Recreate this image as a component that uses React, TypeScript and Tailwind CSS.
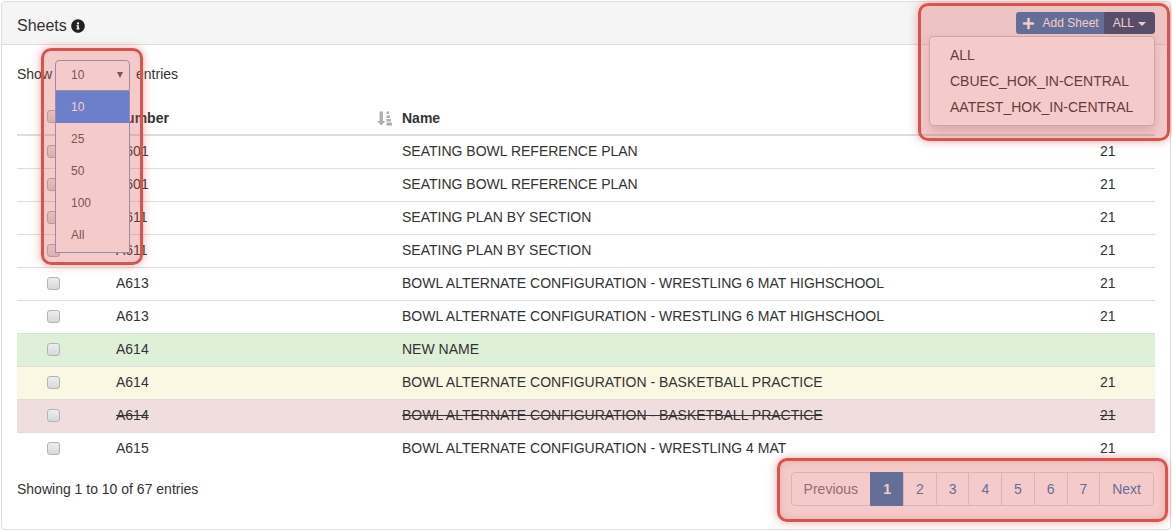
import { FaInfoCircle, FaPlus } from 'react-icons/fa'

type Row = {
  num: string
  name: string
  rev: string
  tone?: 'new' | 'changed' | 'deleted'
}

const rows: Row[] = [
  { num: 'A601', name: 'SEATING BOWL REFERENCE PLAN', rev: '21' },
  { num: 'A601', name: 'SEATING BOWL REFERENCE PLAN', rev: '21' },
  { num: 'A611', name: 'SEATING PLAN BY SECTION', rev: '21' },
  { num: 'A611', name: 'SEATING PLAN BY SECTION', rev: '21' },
  { num: 'A613', name: 'BOWL ALTERNATE CONFIGURATION - WRESTLING 6 MAT HIGHSCHOOL', rev: '21' },
  { num: 'A613', name: 'BOWL ALTERNATE CONFIGURATION - WRESTLING 6 MAT HIGHSCHOOL', rev: '21' },
  { num: 'A614', name: 'NEW NAME', rev: '', tone: 'new' },
  { num: 'A614', name: 'BOWL ALTERNATE CONFIGURATION - BASKETBALL PRACTICE', rev: '21', tone: 'changed' },
  { num: 'A614', name: 'BOWL ALTERNATE CONFIGURATION - BASKETBALL PRACTICE', rev: '21', tone: 'deleted' },
  { num: 'A615', name: 'BOWL ALTERNATE CONFIGURATION - WRESTLING 4 MAT', rev: '21' },
]

const toneClass = {
  new: 'bg-[#dff0d8]',
  changed: 'bg-[#faf7e3]',
  deleted: 'bg-[#f0dede] line-through',
}

function Checkbox() {
  return (
    <span className="block size-[13px] rounded-[3px] border border-[#b4b4b4] bg-gradient-to-b from-[#eeeeee] to-[#d8d8d8]" />
  )
}

function SortIcon() {
  return (
    <svg width="15" height="15" viewBox="0 0 15 15" className="fill-[#b0b0b0]">
      <path d="M2.500 .5h3.500v9.500h2.500L4.250 14.500 0 10h2.500z" />
      <path d="M9.500 .5h2.500v2.500H9.500zM9.500 4.500h3.500v2.500H9.500zM9.500 8h4.500v2.500H9.500zM9.500 11.500h5.500v3H9.500z" />
    </svg>
  )
}

function Pagination() {
  const pages = ['1', '2', '3', '4', '5', '6', '7']
  return (
    <div className="flex h-[34px] text-[14px] leading-[20px]">
      <span className="flex items-center rounded-l-[4px] border border-[#dddddd] px-[12px] text-[#777777]">Previous</span>
      {pages.map((p) => (
        <span
          key={p}
          className={
            p === '1'
              ? 'ml-[-1px] flex w-[34px] items-center justify-center bg-[#337ab7] font-bold text-white'
              : 'ml-[-1px] flex w-[33.700px] items-center justify-center border border-[#dddddd] text-[#337ab7]'
          }
        >
          {p}
        </span>
      ))}
      <span className="ml-[-1px] flex items-center rounded-r-[4px] border border-[#dddddd] px-[12px] text-[#337ab7]">Next</span>
    </div>
  )
}

export default function App() {
  return (
    <div className="relative h-[531px] w-[1172px] overflow-hidden bg-white font-['Liberation_Sans',Arial,sans-serif] text-[14px] leading-[20px] text-[#333333]">
      <div className="mx-[1px] mt-[1px] h-[529px] rounded-[4px] border border-[#dddddd]">
        {/* panel heading */}
        <div className="flex h-[43px] items-center justify-between rounded-t-[4px] border-b border-[#dddddd] bg-[#f5f5f5] pl-[15px] pr-[15px]">
          <div className="mt-[6px] flex items-center gap-[4px] text-[16px]">
            Sheets
            <FaInfoCircle className="size-[14px] text-[#222222]" />
          </div>
          <div className="flex h-[22px] text-[12px] leading-[18px] text-white">
            <span className="flex items-center gap-[8px] rounded-l-[3px] bg-[#337ab7] pl-[6px] pr-[5px]">
              <FaPlus className="size-[13px]" />
              Add Sheet
            </span>
            <span className="flex items-center gap-[4px] rounded-r-[3px] border border-[#204d74] bg-[#204d74] px-[8px]">
              ALL
              <span className="mt-[1px] border-x-[4px] border-t-[4px] border-x-transparent border-t-white" />
            </span>
          </div>
        </div>

        <div className="px-[15px]">
          <div className="flex h-[42px] items-end pb-[3px] pt-[10px]">
            <span>Show</span>
            <span className="w-[75px]" />
            <span className="ml-[9px]">entries</span>
          </div>

          {/* table */}
          <div className="mt-[15px] flex h-[34px] items-center border-b-2 border-[#dddddd] font-bold">
            <span className="mb-[4px] ml-[30px] w-[69px]">
              <Checkbox />
            </span>
            <span className="w-[261px]">Number</span>
            <span className="w-[25px]">
              <SortIcon />
            </span>
            <span>Name</span>
          </div>
          {rows.map((r, i) => (
            <div
              key={i}
              className={`flex h-[33px] items-center ${i < rows.length - 1 ? 'border-b border-[#dddddd] pb-[2px]' : 'pb-[3px]'} ${r.tone ? toneClass[r.tone] : ''}`}
            >
              <span className="ml-[30px] w-[69px]">
                <Checkbox />
              </span>
              <span className="w-[286px]">{r.num}</span>
              <span className="w-[698px]">{r.name}</span>
              <span>{r.rev}</span>
            </div>
          ))}

          <div className="mt-[6px] flex items-start justify-between pr-[1px]">
            <span className="mt-[7px]">Showing 1 to 10 of 67 entries</span>
            <Pagination />
          </div>
        </div>
      </div>

      {/* page length select, opened */}
      <div className="absolute left-[55px] top-[60px] w-[75px] text-[12px] leading-[18px] text-[#555555]">
        <div className="flex h-[31px] items-center justify-between rounded-t-[4px] border border-[#80a3ce] bg-white pb-[1px] pl-[15px] pr-[6px]">
          10
          <span className="border-x-[3px] border-t-[6px] border-x-transparent border-t-[#555555]" />
        </div>
        <div className="border border-t-0 border-[#80a3ce] bg-white pb-[1px]">
          <div className="flex h-[32px] items-center bg-[#3f92ff] pl-[15px] text-white">10</div>
          <div className="flex h-[32px] items-center pl-[15px]">25</div>
          <div className="flex h-[32px] items-center pl-[15px]">50</div>
          <div className="flex h-[32px] items-center pl-[15px]">100</div>
          <div className="flex h-[32px] items-center pl-[15px]">All</div>
        </div>
      </div>

      {/* sheet set dropdown, opened */}
      <div className="absolute left-[929px] top-[36px] flex h-[90px] w-[226px] flex-col justify-center rounded-[4px] border border-[#cccccc] bg-white pl-[20px] text-[14px] leading-[26px] text-[#333333] shadow-[0_6px_12px_rgba(0,0,0,0.18)]">
        <span>ALL</span>
        <span>CBUEC_HOK_IN-CENTRAL</span>
        <span>AATEST_HOK_IN-CENTRAL</span>
      </div>

      {/* red callouts over the screenshot */}
      <div className="pointer-events-none absolute left-[41px] top-[48px] h-[217px] w-[102px] rounded-[10px] border-[3px] border-[#d9534f] bg-[#d9534f]/30 shadow-[0_0_10px_rgba(217,83,79,0.5)]" />
      <div className="pointer-events-none absolute left-[918px] top-[3px] h-[138px] w-[252px] rounded-[10px] border-[3px] border-[#d9534f] bg-[#d9534f]/30 shadow-[0_0_10px_rgba(217,83,79,0.5)]" />
      <div className="pointer-events-none absolute left-[777px] top-[458px] h-[64px] w-[391px] rounded-[10px] border-[3px] border-[#d9534f] bg-[#d9534f]/30 shadow-[0_0_10px_rgba(217,83,79,0.5),inset_0_0_8px_rgba(217,83,79,0.25)]" />
    </div>
  )
}
